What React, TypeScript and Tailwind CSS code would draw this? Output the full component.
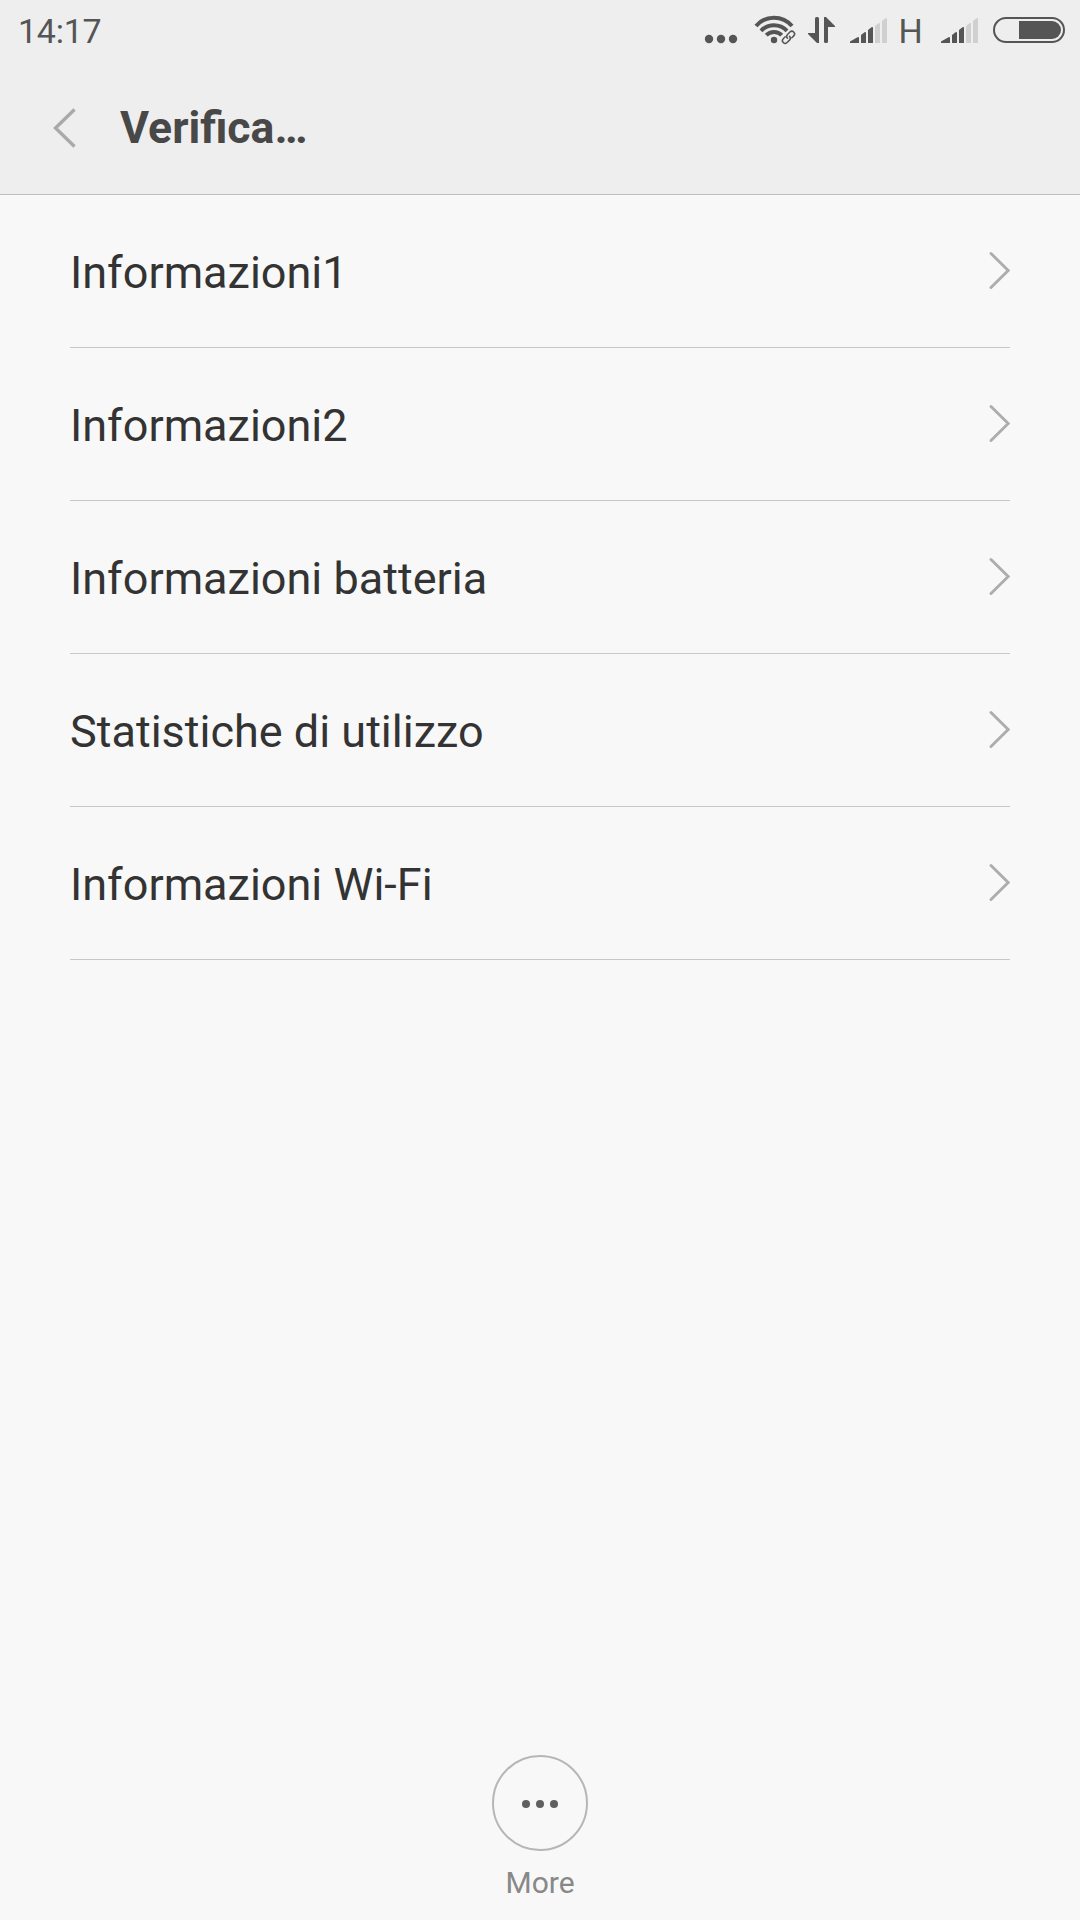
import React from "react";

const items = [
  "Informazioni1",
  "Informazioni2",
  "Informazioni batteria",
  "Statistiche di utilizzo",
  "Informazioni Wi-Fi",
];

function Dots() {
  return (
    <svg width="34" height="60" viewBox="704 0 34 60" fill="#555555">
      <circle cx="709" cy="39" r="4.2" />
      <circle cx="721" cy="39" r="4.2" />
      <circle cx="733" cy="39" r="4.2" />
    </svg>
  );
}

function Wifi() {
  return (
    <svg width="44" height="60" viewBox="753 0 44 60" fill="none" stroke="#555555">
      <path d="M756 26 A23.7 23.7 0 0 1 792 26" strokeWidth="4" />
      <path d="M761 30.8 A18 18 0 0 1 787 30.8" strokeWidth="4" />
      <path d="M766.2 35.2 A11 11 0 0 1 781.8 35.2" strokeWidth="4" />
      <circle cx="774" cy="40" r="3.2" fill="#555555" stroke="none" />
      <g transform="rotate(-45 788.5 37.3)" strokeWidth="1.5" strokeLinecap="round">
        <path d="M786.5 34.6H783.8a2.7 2.7 0 0 0 0 5.4H787.2a2.7 2.7 0 0 0 2.7-2.7" />
        <path d="M790.5 40H793.2a2.7 2.7 0 0 0 0-5.4H789.8a2.7 2.7 0 0 0-2.7 2.7" />
      </g>
    </svg>
  );
}

function Transfer() {
  return (
    <svg width="30" height="60" viewBox="807 0 30 60" fill="#555555">
      <path d="M815 18.5a1.5 1.5 0 0 1 1.5-1.5h1a1.5 1.5 0 0 1 1.5 1.5V43h-2L808 34V33h7z" />
      <path d="M824 17h2l9 9V27h-7v14.5a1.5 1.5 0 0 1-1.5 1.5h-1a1.5 1.5 0 0 1-1.5-1.5z" />
    </svg>
  );
}

function Signal() {
  return (
    <svg width="38" height="60" viewBox="0 0 38 60">
      <g fill="#555555">
        <path d="M0 43V41.6L7.5 37.2Q9 36.6 9 38V43Z" />
        <path d="M11 43V35L14.5 32.2Q16 31.5 16 33V43Z" />
        <path d="M18 43V30L21.5 27.2Q23 26.5 23 28V43Z" />
      </g>
      <g fill="#d0d0d0">
        <path d="M25 43V26L28.5 23.2Q30 22.5 30 24V43Z" />
        <path d="M32 43V21L35.5 18.2Q37 17.5 37 19V43Z" />
      </g>
    </svg>
  );
}

function Battery() {
  return (
    <svg width="73" height="60" viewBox="992 0 73 60">
      <rect x="994" y="18" width="70" height="24" rx="12" fill="none" stroke="#555555" strokeWidth="2" />
      <path d="M1019 21h33a9 9 0 0 1 0 18h-33z" fill="#555555" />
    </svg>
  );
}

export default function App() {
  return (
    <div className="flex h-[1920px] w-[1080px] flex-col overflow-hidden bg-[#f8f8f8] font-['Roboto',sans-serif]">
      <header className="h-[195px] border-b border-[#bfbfbf] bg-[#eeeeee]">
        <div className="flex h-[60px] pl-[18px] text-[34px] leading-[63px] text-[#555555]">
          <span className="w-[686px] tracking-[-0.25px]">14:17</span>
          <Dots />
          <span className="w-[15px]" />
          <Wifi />
          <span className="w-[10px]" />
          <Transfer />
          <span className="w-[13px]" />
          <Signal />
          <span className="w-[53px] pl-[10.5px]">H</span>
          <Signal />
          <span className="w-[13px]" />
          <Battery />
        </div>
        <div className="flex h-[134px] pl-[50px]">
          <svg width="30" height="134" viewBox="50 60 30 134" fill="none" stroke="#a9a9a9" strokeWidth="3.4">
            <path d="M74.5 109.5L55.5 128L74.5 146.5" />
          </svg>
          <h1 className="pl-[40px] text-[45px] font-bold leading-[136px] text-[#484848]">
            <span className="inline-block origin-left scale-x-[0.989]">Verifica…</span>
          </h1>
        </div>
      </header>
      <ul className="px-[70px]">
        {items.map((t) => (
          <li key={t} className="flex h-[153px] justify-between border-b border-[#c8c8c8] text-[45px] leading-[155px] text-[#333333]">
            <span>{t}</span>
            <svg width="24" height="152" viewBox="986 195 24 152" fill="none" stroke="#adadad" strokeWidth="2.9" strokeLinecap="round">
              <path d="M991 253.5L1008.2 270.5L991 287.5" />
            </svg>
          </li>
        ))}
      </ul>
      <footer className="mt-auto flex h-[165px] flex-col items-center text-[30px] leading-[36px] text-[#888888]">
        <svg width="96" height="96" viewBox="0 0 96 96">
          <circle cx="48" cy="48" r="47" fill="none" stroke="#b6b6b6" strokeWidth="2" />
          <g fill="#606060">
            <circle cx="34" cy="49" r="4" />
            <circle cx="48" cy="49" r="4" />
            <circle cx="62" cy="49" r="4" />
          </g>
        </svg>
        <span className="pt-[14px]">More</span>
      </footer>
    </div>
  );
}
